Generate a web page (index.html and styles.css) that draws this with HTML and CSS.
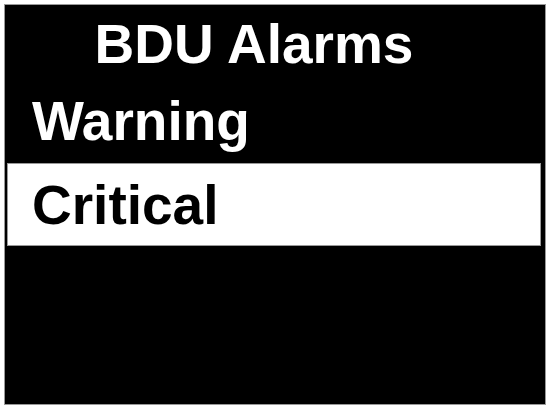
FILE: index.html
```html
<!DOCTYPE html>
<html lang="en">
<head>
<meta charset="utf-8">
<meta name="viewport" content="width=device-width, initial-scale=1">
<title>BDU Alarms</title>
<link rel="stylesheet" href="styles.css">
</head>
<body>
<main class="screen">
  <h1 class="title">BDU Alarms</h1>
  <nav class="menu" aria-label="Alarm types">
    <button class="item" type="button">Warning</button>
    <button class="item selected" type="button" aria-current="true">Critical</button>
  </nav>
</main>
</body>
</html>
```
FILE: styles.css
```css
* {
  box-sizing: border-box;
}

body {
  margin: 0;
  padding: 4px 4px 5px;
  min-height: 100vh;
  display: flex;
  background: #fff;
  font-family: "Liberation Sans", Arial, sans-serif;
}

.screen {
  flex: 1;
  padding: 0 4px 0 2px;
  border: 1px solid #999;
  background: #000;
  color: #fff;
}

.title {
  margin: 0;
  padding-right: 40px;
  font-size: 55px;
  font-weight: 700;
  line-height: 78px;
  text-align: center;
}

.menu {
  display: flex;
  flex-direction: column;
  gap: 4px;
}

.item {
  padding: 0 24px;
  border: 1px solid transparent;
  background: transparent;
  color: inherit;
  font: 700 55px/74px "Liberation Sans", Arial, sans-serif;
  text-align: left;
}

.selected {
  padding-top: 2px;
  border-color: #999;
  background: #fff;
  color: #000;
  line-height: 79px;
}
```
